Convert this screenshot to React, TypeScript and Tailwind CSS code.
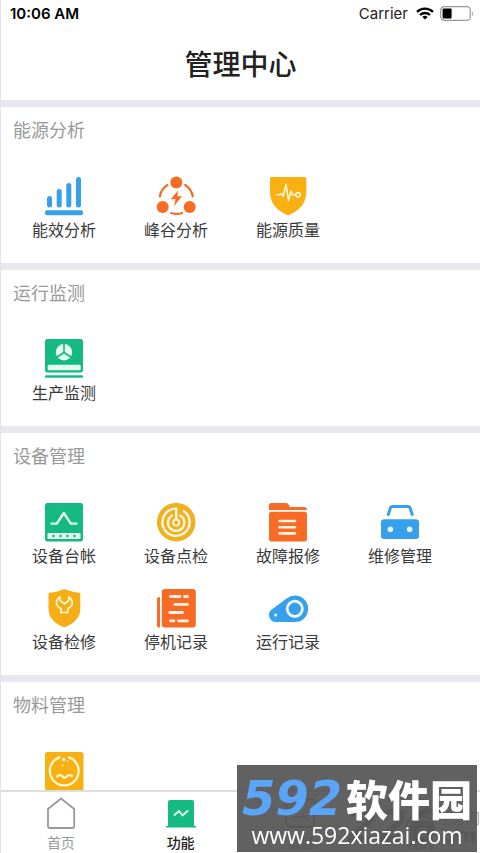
import { useState } from 'react'
import type { ReactNode } from 'react'

const BLUE = '#36a0ea'
const ORANGE = '#f76b24'
const AMBER = '#f8b013'
const GREEN = '#14ba82'
const MINT = '#e2fbee'
const CREAM = '#fff6d6'

function Icon({ children }: { children: ReactNode }) {
  return (
    <svg viewBox="0 0 38 38" className="size-[38px] overflow-visible" fill="none" strokeLinecap="round" strokeLinejoin="round" aria-hidden="true">
      {children}
    </svg>
  )
}

const BarsIcon = (
  <Icon>
    <g fill={BLUE}>
      <rect x="2" y="19" width="5" height="11.5" rx="2.5" />
      <rect x="11.7" y="12" width="5" height="18.5" rx="2.5" />
      <rect x="21.3" y="6" width="5" height="24.5" rx="2.5" />
      <rect x="31" y="0" width="5" height="30.5" rx="2.5" />
      <rect x="0" y="33.3" width="38" height="5" rx="2.2" />
    </g>
  </Icon>
)

const PeakIcon = (
  <Icon>
    <g fill={ORANGE}>
      <circle cx="19.3" cy="5.6" r="6" />
      <circle cx="5.7" cy="30" r="6" />
      <circle cx="32.7" cy="30" r="6" />
      <path d="M21 13.5 L13.8 22.3 H18.6 L17 29.3 L25 19.3 H20.4 Z" />
    </g>
    <g stroke={ORANGE} strokeWidth="2.2">
      <path d="M2.8 19.5 A17 17 0 0 1 10.4 8" />
      <path d="M28.2 8 A17 17 0 0 1 35.8 19.5" />
      <path d="M14.2 36 Q19.5 37.8 25 36" />
    </g>
  </Icon>
)

const QualityIcon = (
  <Icon>
    <path d="M2.5 0 H35.8 Q37.3 0 37.3 1.5 V15 Q37.3 31 19.2 38.4 Q1 31 1 15 V1.5 Q1 0 2.5 0 Z" fill={AMBER} />
    <path d="M8 17.8 H10.5 L12.5 16.5 L14 19.5 L17 7.5 L19.5 23.5 L22 14 L23.5 17.8 H26.5" stroke={CREAM} strokeWidth="1.6" />
    <circle cx="29" cy="17.8" r="2.2" stroke={CREAM} strokeWidth="1.6" />
  </Icon>
)

const ProductionIcon = (
  <Icon>
    <rect y="-1" width="38" height="33.4" rx="2.5" fill={GREEN} />
    <rect x="2.7" y="24.7" width="33" height="5.6" rx="1" fill={MINT} />
    <circle cx="19" cy="12.2" r="8.2" fill={MINT} />
    <path d="M19 3 V12.5 L10.5 18 M19 12.5 L27.5 18" stroke={GREEN} strokeWidth="1.6" />
    <rect y="35.3" width="38" height="2.5" rx="1" fill={GREEN} />
  </Icon>
)

const LedgerIcon = (
  <Icon>
    <rect width="38" height="38.5" rx="2.5" fill={GREEN} />
    <path d="M6.5 20.6 H11.8 L18.8 10 L25.8 20.6 H31.5" stroke={MINT} strokeWidth="2.4" />
    <rect x="2.5" y="30" width="33" height="6" rx="1" fill={MINT} />
    <g fill={GREEN}>
      <circle cx="8.5" cy="33" r="1.3" />
      <circle cx="15.5" cy="33" r="1.3" />
      <circle cx="22.5" cy="33" r="1.3" />
      <circle cx="29.5" cy="33" r="1.3" />
    </g>
  </Icon>
)

const InspectIcon = (
  <Icon>
    <circle cx="19.2" cy="19.2" r="19.3" fill="#efb023" />
    <g stroke={CREAM} strokeWidth="2.4">
      <path d="M27 8.2 A13.6 13.6 0 1 1 19.2 5.6 V16" />
      <path d="M23.3 12.6 A8.2 8.2 0 1 1 15 12.6" />
    </g>
    <circle cx="19.2" cy="19.4" r="3" stroke={CREAM} strokeWidth="2" />
  </Icon>
)

const FolderIcon = (
  <Icon>
    <path d="M0 7 V2.5 Q0 0 2.5 0 H17 Q19 0 20 2 L21 4 H35 Q38 4 38 7 Z" fill={ORANGE} />
    <rect y="8.8" width="38" height="29.7" rx="2.5" fill={ORANGE} />
    <path d="M10.5 18 H26 M10.5 24.2 H26 M10.5 30.4 H26" stroke="#fff1e6" strokeWidth="2.6" />
  </Icon>
)

const ToolboxIcon = (
  <Icon>
    <path d="M7.3 11.5 L9.5 4.8 Q10 3.5 11.5 3.5 H27 Q28.5 3.5 29 4.8 L31.2 11.5" stroke={BLUE} strokeWidth="3" />
    <rect y="16.3" width="38" height="19.7" rx="3" fill={BLUE} />
    <circle cx="9.4" cy="26.3" r="2.8" fill="#e8f7ff" />
    <circle cx="28.6" cy="26.3" r="2.8" fill="#e8f7ff" />
  </Icon>
)

const RepairIcon = (
  <Icon>
    <path d="M4.5 3.8 Q12 3.2 18 .6 Q19.3 0 20.6 .6 Q27 3.2 34.2 3.8 Q35.3 4 35.3 5 V20 Q35.3 32 19.3 38.5 Q3.5 32 3.5 20 V5 Q3.5 4 4.5 3.8 Z" fill="#f6ae16" />
    <path d="M15 8 Q10.2 11 12 16 Q13 18.3 16 19.5 V23.5 H22.8 V19.5 Q25.8 18.3 26.8 16 Q28.5 11 23.8 8 V11.5 L19.4 14.8 L15 11.5 Z" stroke={CREAM} strokeWidth="1.7" />
  </Icon>
)

const StopIcon = (
  <Icon>
    <path d="M3 8 V38.5 H2 Q0 38.5 0 36.5 V10 Q0 8 3 8 Z" fill={ORANGE} />
    <rect x="4.8" width="34" height="38.5" rx="3" fill={ORANGE} />
    <path d="M13.5 7.5 H23 M27.5 7.5 H30.5 M17.8 15.4 H30.5 M12.8 23.5 H25.5 M13.5 31.8 H17 M21.5 31.8 H30.5" stroke="#fff1e6" strokeWidth="2.8" />
  </Icon>
)

const RunIcon = (
  <Icon>
    <path d="M26 6.6 A13.2 13.2 0 0 1 26 33 H7 A7 7 0 0 1 2.8 20.4 L17.5 9.6 Q21.5 6.6 26 6.6 Z" fill={BLUE} />
    <circle cx="25.8" cy="19.8" r="7.6" stroke="#eefaff" strokeWidth="2.8" />
    <circle cx="6.7" cy="26" r="1.5" fill="#eefaff" />
  </Icon>
)

const MaterialIcon = (
  <Icon>
    <rect width="38.5" height="38.5" rx="2.5" fill={AMBER} />
    <path d="M14.5 5.4 A14.4 14.4 0 1 0 24 5.4" stroke={CREAM} strokeWidth="2.2" />
    <path d="M12 24.5 Q14.5 22 17 24 Q19.3 27.3 21.5 24.5 Q24 22 27 24" stroke={CREAM} strokeWidth="2.2" />
    <circle cx="18.8" cy="7.4" r="1.7" fill={CREAM} />
    <circle cx="22.5" cy="9.2" r=".8" fill={CREAM} />
    <circle cx="17.6" cy="13.5" r=".9" fill={CREAM} />
  </Icon>
)

const sections: { title: string; items: { label: string; icon: ReactNode }[] }[] = [
  {
    title: '能源分析',
    items: [
      { label: '能效分析', icon: BarsIcon },
      { label: '峰谷分析', icon: PeakIcon },
      { label: '能源质量', icon: QualityIcon },
    ],
  },
  { title: '运行监测', items: [{ label: '生产监测', icon: ProductionIcon }] },
  {
    title: '设备管理',
    items: [
      { label: '设备台帐', icon: LedgerIcon },
      { label: '设备点检', icon: InspectIcon },
      { label: '故障报修', icon: FolderIcon },
      { label: '维修管理', icon: ToolboxIcon },
      { label: '设备检修', icon: RepairIcon },
      { label: '停机记录', icon: StopIcon },
      { label: '运行记录', icon: RunIcon },
    ],
  },
  { title: '物料管理', items: [{ label: '', icon: MaterialIcon }] },
]

function TabIcon({ children }: { children: ReactNode }) {
  return (
    <svg viewBox="0 0 32 32" className="size-8" fill="none" stroke="#999" strokeWidth="1.8" strokeLinecap="round" strokeLinejoin="round" aria-hidden="true">
      {children}
    </svg>
  )
}

const tabs: { label: string; icon: ReactNode }[] = [
  {
    label: '首页',
    icon: <TabIcon><path d="M16 1.5 L29.2 12 V29 Q29.2 31 27.2 31 H5 Q3 31 3 29 V12 Z" /></TabIcon>,
  },
  {
    label: '功能',
    icon: (
      <TabIcon>
        <path d="M5 3 H27 Q29 3 29 5 V29 H31 V30.5 H1 V29 H3 V5 Q3 3 5 3 Z" fill={GREEN} stroke="none" />
        <path d="M9.5 18 L14 14 L17.5 18.5 L22.5 14" stroke={MINT} strokeWidth="2" />
      </TabIcon>
    ),
  },
  {
    label: '消息',
    icon: <TabIcon><path d="M4 2 H28 Q30 2 30 4 V30 H8 Q2 30 2 24 V4 Q2 2 4 2 Z M10 20 H22" /></TabIcon>,
  },
  {
    label: '我的',
    icon: <TabIcon><circle cx="16" cy="9" r="7" /><path d="M2.5 30 Q3 19 16 19 Q29 19 29.5 30 Z" /></TabIcon>,
  },
]

function StatusBar() {
  return (
    <div className="flex h-[27px] items-center justify-between pl-[9px] pr-1.5 font-['Inter','Liberation_Sans',sans-serif] text-[15px] leading-5 text-black">
      <span className="font-semibold">10:06 AM</span>
      <span className="flex items-center">
        <span className="text-[#222]">Carrier</span>
        <svg viewBox="0 0 18 13" className="ml-2 h-[13px] w-[18px]" fill="none" stroke="#000" strokeWidth="2.3" aria-hidden="true">
          <path d="M1 4.8 A11.5 11.5 0 0 1 17 4.8" />
          <path d="M4 8 A7.2 7.2 0 0 1 14 8" />
          <path d="M9 12.6 L6.3 10 A4 4 0 0 1 11.7 10 Z" fill="#000" stroke="none" />
        </svg>
        <svg viewBox="0 0 34 15" className="ml-1.5 h-[15px] w-[34px]" fill="none" aria-hidden="true">
          <rect x=".7" y=".7" width="29.6" height="13.6" rx="3.6" stroke="#999" strokeWidth="1.2" />
          <rect x="2.6" y="2.6" width="9" height="9.8" rx="1" fill="#000" />
          <path d="M32 5 Q33.8 7.5 32 10 Z" fill="#999" />
        </svg>
      </span>
    </div>
  )
}

function SiteBadge() {
  return (
    <>
      <div className="pointer-events-none fixed bottom-0 right-0 flex items-end text-[#777]/70" aria-hidden="true">
        <span className="font-['DejaVu_Sans',sans-serif] text-[44px] font-bold italic leading-[52px]">226</span>
        <span className="flex flex-col items-center pb-2">
          <span className="text-sm leading-4">手游网</span>
          <span className="font-['DejaVu_Sans',sans-serif] text-[20px] font-bold leading-5">om</span>
        </span>
      </div>
      <div className="pointer-events-none fixed bottom-px right-[3px] flex h-[87px] w-60 flex-col items-center bg-[#505050]/90 pt-2.5">
        <div className="flex items-center whitespace-nowrap font-bold leading-[46px]">
          <span className="font-['DejaVu_Sans','Liberation_Sans',sans-serif] text-[48px] italic text-[#5ba5f8]">592</span>
          <span className="ml-1 text-[42px] font-black text-white">软件园</span>
        </div>
        <div className="font-['Open_Sans','Noto_Sans',sans-serif] text-[23px] font-medium leading-7 text-white">www.592xiazai.com</div>
      </div>
    </>
  )
}

export default function App() {
  const [active, setActive] = useState('功能')

  return (
    <div className="flex h-screen flex-col border-l border-[#e4e4e8] bg-white font-['Noto_Sans_CJK_SC',sans-serif]">
      <header>
        <StatusBar />
        <h1 className="pb-[17px] pt-4 text-center text-[28px] font-medium leading-10 text-[#222]">管理中心</h1>
      </header>

      <main className="min-h-0 flex-1 overflow-y-auto [scrollbar-width:none]">
        {sections.map(s => (
          <section key={s.title} className="border-t-[7px] border-[#e8e7ee] pt-2.5">
            <h2 className="pl-3 text-lg leading-6 text-[#999]">{s.title}</h2>
            <div className="grid grid-cols-4 gap-y-[22px] pb-[22px] pl-[7px] pr-6 pt-9">
              {s.items.map((item, i) => (
                <button key={i} aria-label={item.label || s.title} className="flex flex-col items-center gap-[2px] text-base leading-6 text-[#3a3a3a]">
                  {item.icon}
                  {item.label && <span>{item.label}</span>}
                </button>
              ))}
            </div>
          </section>
        ))}
      </main>

      <nav className="grid grid-cols-4 border-t-2 border-[#dedee0] bg-white pt-[5px]">
        {tabs.map(t => (
          <button
            key={t.label}
            onClick={() => setActive(t.label)}
            className={`flex flex-col items-center gap-[3px] pb-px text-sm leading-5 ${active === t.label ? 'font-medium text-[#222]' : 'text-[#999]'}`}
          >
            {t.icon}
            <span>{t.label}</span>
          </button>
        ))}
      </nav>

      <SiteBadge />
    </div>
  )
}
